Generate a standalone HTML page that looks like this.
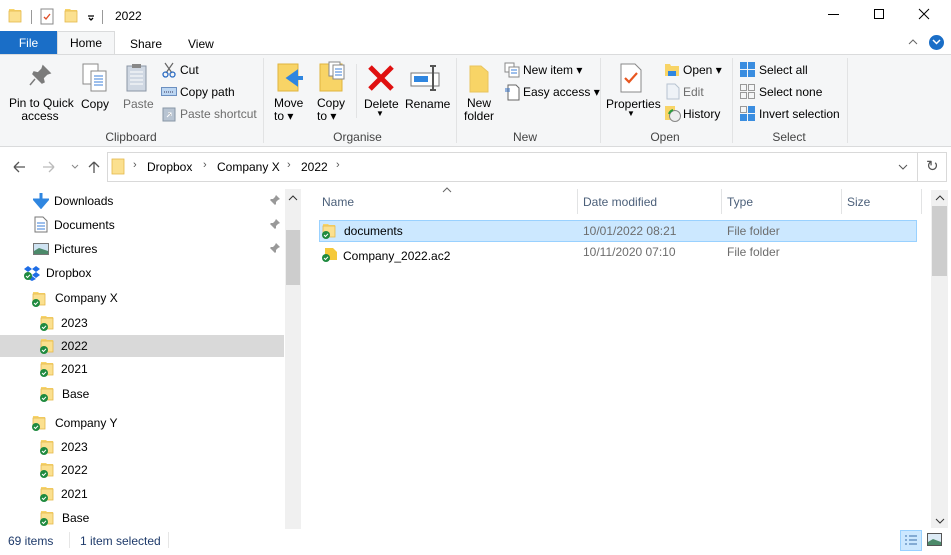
<!DOCTYPE html>
<html><head><meta charset="utf-8"><style>
*{margin:0;padding:0;box-sizing:border-box}
body{width:951px;height:555px;overflow:hidden;background:#fff;font-family:"Liberation Sans",sans-serif;font-size:12px;color:#000;position:relative}
.a{position:absolute;white-space:nowrap}
.g{color:#6d6d6d}
.lbl{position:absolute;color:#444;font-size:12px;text-align:center}
.sep{position:absolute;width:1px;background:#e2e3e4}
</style></head><body>
<svg width="0" height="0" style="position:absolute"><defs>
<g id="fd"><path d="M1 2h5l1 1h6v12H1z" fill="#f7d46b"/><rect x="1" y="4" width="12" height="11" fill="#fbe08f" stroke="#e5b94a" stroke-width="0.8"/></g>
<g id="ck"><circle cx="4" cy="4" r="4" fill="#1f8a3f"/><path d="M2 4l1.5 1.5L6 2.8" stroke="#fff" stroke-width="1" fill="none"/></g>
</defs></svg>
<svg class="a" style="left:8px;top:7px" width="100" height="20"><use href="#fd"/><rect x="23" y="3" width="1" height="14" fill="#999"/><rect x="33" y="2" width="12" height="15" fill="#fff" stroke="#888"/><path d="M36 10l2 2 4-5" stroke="#e0502a" fill="none" stroke-width="1.4"/><use href="#fd" x="56"/><path d="M80 9h6M81 11l2 2 2-2" stroke="#000" stroke-width="1.3" fill="none"/><rect x="94" y="3" width="1" height="14" fill="#999"/></svg>
<div class="a" style="left:115px;top:9px;font-size:12px">2022</div>
<div class="a" style="left:828px;top:14px;width:11px;height:1px;background:#000"></div>
<div class="a" style="left:874px;top:9px;width:10px;height:10px;border:1px solid #000"></div>
<svg class="a" style="left:918px;top:8px" width="12" height="12"><path d="M1 1l10 10M11 1L1 11" stroke="#000"/></svg>
<div class="a" style="left:0;top:31px;width:57px;height:24px;background:#1a6ec7;color:#fff;text-align:center;line-height:24px">File</div>
<div class="a" style="left:57px;top:31px;width:58px;height:24px;background:#f5f6f7;border:1px solid #dadbdc;border-bottom:none;text-align:center;line-height:23px">Home</div>
<div class="a" style="left:130px;top:37px">Share</div>
<div class="a" style="left:188px;top:37px">View</div>
<svg class="a" style="left:908px;top:38px" width="10" height="7"><path d="M1 6l4-4 4 4" stroke="#666" fill="none"/></svg>
<div class="a" style="left:929px;top:35px;width:15px;height:15px;border-radius:50%;background:#1a6ec7"></div>
<svg class="a" style="left:932px;top:39px" width="9" height="7"><path d="M1 1l3.5 3.5L8 1" stroke="#fff" stroke-width="1.5" fill="none"/></svg>
<div class="a" style="left:0;top:54px;width:951px;height:93px;background:#f5f6f7;border-top:1px solid #dadbdc;border-bottom:1px solid #dadbdc"></div>
<svg class="a" style="left:28px;top:64px" width="24" height="26"><path d="M15 2l7 7-3 1-4 4 1 4-2 1-9-9 1-2 4 1 4-4z M7 15l-5 6" fill="#7b7b7b" stroke="#7b7b7b" stroke-width="1.5"/></svg>
<div class="a" style="left:9px;top:97px;text-align:center;width:62px;line-height:13px">Pin to Quick<br>access</div>
<svg class="a" style="left:81px;top:62px" width="28" height="32"><rect x="2" y="2" width="15" height="20" fill="#fff" stroke="#8a8a8a"/><rect x="10" y="9" width="15" height="20" fill="#fff" stroke="#8a8a8a"/><path d="M13 14h9M13 17h9M13 20h9M13 23h9" stroke="#3b7fd8"/></svg>
<div class="a" style="left:81px;top:97px">Copy</div>
<svg class="a" style="left:125px;top:62px" width="24" height="32"><rect x="2" y="4" width="19" height="25" fill="#d0d8e3" stroke="#8a96a6"/><rect x="7" y="2" width="9" height="4" fill="#888"/><path d="M5 10h13M5 14h13M5 18h13M5 22h13" stroke="#fff"/></svg>
<div class="a g" style="left:123px;top:97px">Paste</div>
<svg class="a" style="left:162px;top:62px" width="14" height="16"><path d="M3 1l7 10M11 1L4 11" stroke="#666" stroke-width="1.2"/><circle cx="3.5" cy="12.5" r="2.5" fill="none" stroke="#2b6cc4" stroke-width="1.3"/><circle cx="10.5" cy="12.5" r="2.5" fill="none" stroke="#2b6cc4" stroke-width="1.3"/></svg>
<div class="a" style="left:180px;top:63px">Cut</div>
<svg class="a" style="left:161px;top:87px" width="16" height="9"><rect x="0.5" y="0.5" width="15" height="8" fill="#bcd6f2" stroke="#6b8fc0"/><path d="M3 5h9" stroke="#335" stroke-dasharray="1 1"/></svg>
<div class="a" style="left:180px;top:85px">Copy path</div>
<svg class="a" style="left:162px;top:106px" width="14" height="16"><rect x="1" y="2" width="12" height="13" fill="#b8c4d2" stroke="#8896a6"/><path d="M5 11l4-4M6 7h3v3" stroke="#fff"/></svg>
<div class="a g" style="left:180px;top:107px">Paste shortcut</div>
<div class="lbl" style="left:100px;top:130px;width:62px">Clipboard</div>
<div class="sep" style="left:263px;top:58px;height:85px"></div>
<svg class="a" style="left:276px;top:63px" width="30" height="30"><rect x="2" y="1" width="20" height="27" fill="#f8d466" stroke="#e0b43e"/><path d="M13 15h14M20 10l-7 5 7 5z" fill="#2f86e0" stroke="#2f86e0" stroke-width="4"/></svg>
<div class="a" style="left:274px;top:97px;line-height:13px">Move<br>to ▾</div>
<svg class="a" style="left:319px;top:61px" width="28" height="32"><rect x="1" y="3" width="22" height="27" fill="#f8d466" stroke="#e0b43e"/><rect x="10" y="1" width="11" height="14" fill="#fff" stroke="#888"/><rect x="14" y="4" width="11" height="14" fill="#fff" stroke="#888"/><path d="M16 8h7M16 11h7M16 14h7" stroke="#3b7fd8"/></svg>
<div class="a" style="left:317px;top:97px;line-height:13px">Copy<br>to ▾</div>
<div class="sep" style="left:356px;top:64px;height:54px"></div>
<svg class="a" style="left:367px;top:64px" width="28" height="28"><path d="M3 3l22 22M25 3L3 25" stroke="#e01010" stroke-width="5"/></svg>
<div class="a" style="left:364px;top:97px">Delete</div>
<div class="a" style="left:376px;top:109px;font-size:8px">▼</div>
<svg class="a" style="left:410px;top:64px" width="32" height="28"><rect x="1" y="9" width="28" height="13" fill="#fff" stroke="#777"/><rect x="4" y="12" width="14" height="6" fill="#2f86e0"/><path d="M20 2h6M23 2v24M20 26h6" stroke="#555" stroke-width="2"/></svg>
<div class="a" style="left:405px;top:97px">Rename</div>
<div class="lbl" style="left:330px;top:130px;width:55px">Organise</div>
<div class="sep" style="left:456px;top:58px;height:85px"></div>
<svg class="a" style="left:468px;top:64px" width="22" height="30"><path d="M2 2h11l7 6v20H2z" fill="#f8d466" stroke="#e9c45e"/></svg>
<div class="a" style="left:464px;top:97px;text-align:center;line-height:13px">New<br>folder</div>
<svg class="a" style="left:504px;top:62px" width="16" height="16"><rect x="1" y="1" width="9" height="9" fill="#fff" stroke="#888"/><rect x="5" y="5" width="10" height="10" fill="#fff" stroke="#888"/><path d="M7 8h6M7 11h6" stroke="#3b7fd8"/></svg>
<div class="a" style="left:523px;top:63px">New item ▾</div>
<svg class="a" style="left:504px;top:84px" width="16" height="17"><path d="M4 1h8l3 3v12H4z" fill="#fff" stroke="#666"/><path d="M1 5h5M1 7h5" stroke="#2f6cc0"/></svg>
<div class="a" style="left:523px;top:85px">Easy access ▾</div>
<div class="lbl" style="left:505px;top:130px;width:40px">New</div>
<div class="sep" style="left:600px;top:58px;height:85px"></div>
<svg class="a" style="left:619px;top:63px" width="24" height="30"><path d="M2 1h14l6 6v22H2z" fill="#fff" stroke="#888"/><path d="M6 15l4 4 8-9" stroke="#e8561f" stroke-width="2.2" fill="none"/></svg>
<div class="a" style="left:606px;top:97px">Properties</div>
<div class="a" style="left:627px;top:109px;font-size:8px">▼</div>
<svg class="a" style="left:664px;top:62px" width="16" height="15"><path d="M1 2h5l1 2h8v10H1z" fill="#f8d466"/><path d="M4 9h8v5H4z" fill="#2f86e0"/></svg>
<div class="a" style="left:683px;top:63px">Open ▾</div>
<svg class="a" style="left:666px;top:83px" width="14" height="17"><path d="M1 1h8l4 4v11H1z" fill="#eef2f7" stroke="#b7c3d0"/></svg>
<div class="a g" style="left:683px;top:85px">Edit</div>
<svg class="a" style="left:664px;top:105px" width="18" height="18"><rect x="1" y="1" width="10" height="14" fill="#f8d466"/><circle cx="11" cy="11" r="5.5" fill="#eee" stroke="#888"/><path d="M5 9a6 6 0 0 1 4-4" stroke="#2a9e3e" stroke-width="2" fill="none"/></svg>
<div class="a" style="left:683px;top:107px">History</div>
<div class="lbl" style="left:645px;top:130px;width:40px">Open</div>
<div class="sep" style="left:732px;top:58px;height:85px"></div>
<svg class="a" style="left:740px;top:62px" width="16" height="16"><rect x="0" y="0" width="7" height="7" fill="#3a8de0"/><rect x="8" y="0" width="7" height="7" fill="#3a8de0"/><rect x="0" y="8" width="7" height="7" fill="#3a8de0"/><rect x="8" y="8" width="7" height="7" fill="#3a8de0"/></svg>
<div class="a" style="left:759px;top:63px">Select all</div>
<svg class="a" style="left:740px;top:84px" width="16" height="16"><g fill="none" stroke="#999"><rect x="0.5" y="0.5" width="6" height="6"/><rect x="8.5" y="0.5" width="6" height="6"/><rect x="0.5" y="8.5" width="6" height="6"/><rect x="8.5" y="8.5" width="6" height="6"/></g></svg>
<div class="a" style="left:759px;top:85px">Select none</div>
<svg class="a" style="left:740px;top:106px" width="16" height="16"><rect x="0.5" y="0.5" width="6" height="6" fill="none" stroke="#999"/><rect x="8" y="0" width="7" height="7" fill="#3a8de0"/><rect x="0" y="8" width="7" height="7" fill="#3a8de0"/><rect x="8" y="8" width="7" height="7" fill="#3a8de0"/></svg>
<div class="a" style="left:759px;top:107px">Invert selection</div>
<div class="lbl" style="left:769px;top:130px;width:40px">Select</div>
<div class="sep" style="left:847px;top:58px;height:85px"></div>
<svg class="a" style="left:10px;top:159px" width="90" height="16"><path d="M4 8h11M4 8l5-5M4 8l5 5" stroke="#555" stroke-width="1.3" fill="none"/><path d="M33 8h11M44 8l-5-5M44 8l-5 5" stroke="#bbb" stroke-width="1.3" fill="none"/><path d="M62 6l3 3 3-3" stroke="#888" fill="none"/><path d="M84 14V3M84 3l-5 5M84 3l5 5" stroke="#555" stroke-width="1.3" fill="none"/></svg>
<div class="a" style="left:107px;top:152px;width:811px;height:30px;border:1px solid #d9d9d9"></div>
<div class="a" style="left:917px;top:152px;width:30px;height:30px;border:1px solid #d9d9d9"></div>
<svg class="a" style="left:111px;top:157px" width="16" height="20"><rect x="1" y="2" width="12" height="15" fill="#fbe08f" stroke="#e5b94a" stroke-width="0.8"/></svg>
<div class="a" style="left:133px;top:159px;color:#555;font-size:11px">›</div>
<div class="a" style="left:147px;top:160px">Dropbox</div>
<div class="a" style="left:203px;top:159px;color:#555;font-size:11px">›</div>
<div class="a" style="left:217px;top:160px">Company X</div>
<div class="a" style="left:287px;top:159px;color:#555;font-size:11px">›</div>
<div class="a" style="left:301px;top:160px">2022</div>
<div class="a" style="left:336px;top:159px;color:#555;font-size:11px">›</div>
<svg class="a" style="left:898px;top:164px" width="10" height="6"><path d="M1 1l4 4 4-4" stroke="#555" fill="none"/></svg>
<div class="a" style="left:926px;top:157px;font-size:15px;color:#555">↻</div>
<div class="a" style="left:0;top:335px;width:284px;height:22px;background:#d9d9d9"></div>
<svg class="a" style="left:33px;top:192px" width="16" height="17"><path d="M8 1v10M2 8l6 7 6-7z" stroke="#2f86e0" fill="#2f86e0" stroke-width="3"/></svg>
<div class="a" style="left:54px;top:194px">Downloads</div>
<svg class="a" style="left:34px;top:216px" width="14" height="17"><path d="M1 1h8l4 4v11H1z" fill="#fff" stroke="#777"/><path d="M3 7h8M3 10h8M3 13h8" stroke="#3b7fd8"/></svg>
<div class="a" style="left:54px;top:218px">Documents</div>
<svg class="a" style="left:33px;top:243px" width="16" height="12"><rect x="0.5" y="0.5" width="15" height="11" fill="#cfe3f2" stroke="#777"/><path d="M1 8l5-3 9 3v3H1z" fill="#4c8a6a"/></svg>
<div class="a" style="left:54px;top:242px">Pictures</div>
<svg class="a" style="left:269px;top:194px" width="12" height="60"><g fill="#999"><path d="M7 1l4 4-2 1-2 2 0 2-1 1-5-5 1-1 2 0 2-2z M3 8l-2 3"/><path d="M7 25l4 4-2 1-2 2 0 2-1 1-5-5 1-1 2 0 2-2z"/><path d="M7 49l4 4-2 1-2 2 0 2-1 1-5-5 1-1 2 0 2-2z"/></g></svg>
<svg class="a" style="left:24px;top:265px" width="18" height="16"><g fill="#1e6de6"><path d="M4 1l4 3-4 3-4-3zM12 1l4 3-4 3-4-3zM4 7l4 3-4 3-4-3zM12 7l4 3-4 3-4-3zM8 11l4 3-4 2-4-2z"/></g><use href="#ck" y="7"/></svg>
<div class="a" style="left:46px;top:266px">Dropbox</div>
<svg class="a" style="left:32px;top:290px" width="18" height="18"><use href="#fd"/><use href="#ck" y="9"/></svg>
<div class="a" style="left:55px;top:291px">Company X</div>
<svg class="a" style="left:40px;top:314px" width="18" height="18"><use href="#fd"/><use href="#ck" y="9"/></svg>
<div class="a" style="left:61px;top:316px">2023</div>
<svg class="a" style="left:40px;top:337px" width="18" height="18"><use href="#fd"/><use href="#ck" y="9"/></svg>
<div class="a" style="left:61px;top:339px">2022</div>
<svg class="a" style="left:40px;top:360px" width="18" height="18"><use href="#fd"/><use href="#ck" y="9"/></svg>
<div class="a" style="left:61px;top:362px">2021</div>
<svg class="a" style="left:40px;top:385px" width="18" height="18"><use href="#fd"/><use href="#ck" y="9"/></svg>
<div class="a" style="left:62px;top:387px">Base</div>
<svg class="a" style="left:32px;top:414px" width="18" height="18"><use href="#fd"/><use href="#ck" y="9"/></svg>
<div class="a" style="left:55px;top:416px">Company Y</div>
<svg class="a" style="left:40px;top:438px" width="18" height="18"><use href="#fd"/><use href="#ck" y="9"/></svg>
<div class="a" style="left:61px;top:440px">2023</div>
<svg class="a" style="left:40px;top:461px" width="18" height="18"><use href="#fd"/><use href="#ck" y="9"/></svg>
<div class="a" style="left:61px;top:463px">2022</div>
<svg class="a" style="left:40px;top:485px" width="18" height="18"><use href="#fd"/><use href="#ck" y="9"/></svg>
<div class="a" style="left:61px;top:487px">2021</div>
<svg class="a" style="left:40px;top:509px" width="18" height="18"><use href="#fd"/><use href="#ck" y="9"/></svg>
<div class="a" style="left:62px;top:511px">Base</div>
<div class="a" style="left:285px;top:189px;width:16px;height:340px;background:#f0f0f0"></div>
<div class="a" style="left:286px;top:230px;width:14px;height:55px;background:#cdcdcd"></div>
<svg class="a" style="left:288px;top:195px" width="10" height="6"><path d="M1 5l4-4 4 4" stroke="#333" fill="none"/></svg>
<svg class="a" style="left:442px;top:187px" width="10" height="6"><path d="M1 5l4-4 4 4" stroke="#666" fill="none"/></svg>
<div class="a" style="left:322px;top:195px;color:#4c607a">Name</div>
<div class="sep" style="left:577px;top:189px;height:25px"></div>
<div class="a" style="left:583px;top:195px;color:#4c607a">Date modified</div>
<div class="sep" style="left:721px;top:189px;height:25px"></div>
<div class="a" style="left:727px;top:195px;color:#4c607a">Type</div>
<div class="sep" style="left:841px;top:189px;height:25px"></div>
<div class="a" style="left:847px;top:195px;color:#4c607a">Size</div>
<div class="sep" style="left:921px;top:189px;height:25px"></div>
<div class="a" style="left:319px;top:220px;width:598px;height:22px;background:#cce8ff;border:1px solid #99d1ff"></div>
<svg class="a" style="left:322px;top:222px" width="18" height="18"><use href="#fd"/><use href="#ck" y="9"/></svg>
<div class="a" style="left:344px;top:224px">documents</div>
<div class="a g" style="left:583px;top:224px">10/01/2022 08:21</div>
<div class="a g" style="left:727px;top:224px">File folder</div>
<svg class="a" style="left:322px;top:246px" width="18" height="18"><path d="M3 2h8l4 4v8H3z" fill="#f5c93a"/><use href="#ck" y="8"/></svg>
<div class="a" style="left:343px;top:249px">Company_2022.ac2</div>
<div class="a g" style="left:583px;top:245px">10/11/2020 07:10</div>
<div class="a g" style="left:727px;top:245px">File folder</div>
<div class="a" style="left:931px;top:190px;width:17px;height:338px;background:#f0f0f0"></div>
<div class="a" style="left:932px;top:206px;width:15px;height:70px;background:#cdcdcd"></div>
<svg class="a" style="left:935px;top:195px" width="10" height="6"><path d="M1 5l4-4 4 4" stroke="#333" fill="none"/></svg>
<svg class="a" style="left:935px;top:518px" width="10" height="6"><path d="M1 1l4 4 4-4" stroke="#333" fill="none"/></svg>
<div class="a" style="left:8px;top:534px;color:#1e3a6a">69 items</div>
<div class="a" style="left:69px;top:532px;width:1px;height:16px;background:#e6e6e6"></div>
<div class="a" style="left:80px;top:534px;color:#1e3a6a">1 item selected</div>
<div class="a" style="left:168px;top:532px;width:1px;height:16px;background:#e6e6e6"></div>
<div class="a" style="left:900px;top:530px;width:22px;height:21px;background:#cce8ff;border:1px solid #99d1ff"></div>
<svg class="a" style="left:904px;top:534px" width="14" height="13"><path d="M1 2h2M5 2h8M1 6h2M5 6h8M1 10h2M5 10h8" stroke="#3a6ea8"/></svg>
<svg class="a" style="left:927px;top:533px" width="16" height="14"><rect x="0.5" y="0.5" width="14" height="12" fill="#dceaf5" stroke="#555"/><path d="M1 9l5-3 8 3v3H1z" fill="#4c8a6a"/></svg>
</body></html>
